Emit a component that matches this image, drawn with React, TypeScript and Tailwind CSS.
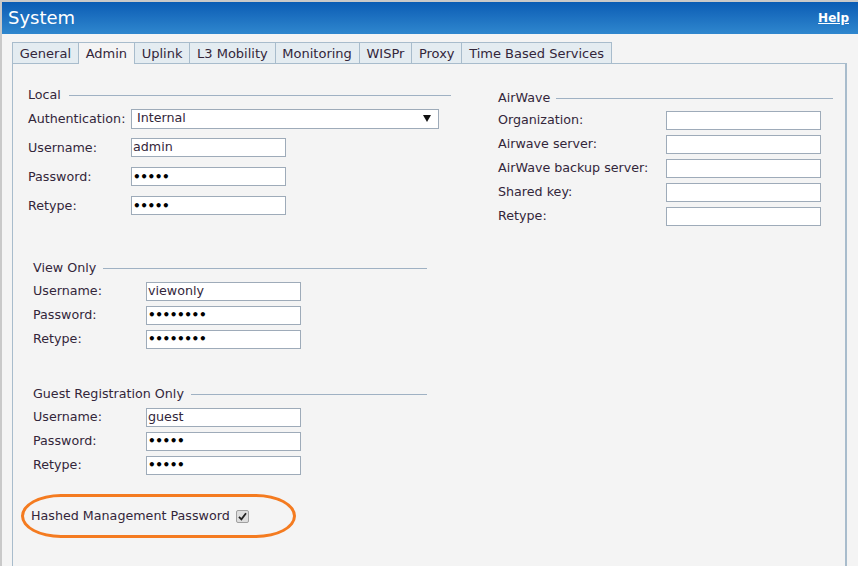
import React from "react";

const LBL = "text-[#33263a]";

function Legend({ title, lineGap = 7 }: { title: string; lineGap?: number }) {
  return (
    <div className="h-[16px] flex items-center">
      <span className={`${LBL} leading-none`}>{title}</span>
      <div className="flex-1 h-px bg-[#9fb1c3]" style={{ marginLeft: lineGap }} />
    </div>
  );
}

function Field({ value, pw, w = 155 }: { value?: string; pw?: boolean; w?: number }) {
  return (
    <div
      className="h-[19px] border border-[#9eabb9] bg-white flex items-center pl-[1px] overflow-hidden"
      style={{ width: w }}
    >
      {pw ? (
        <span className="text-[12px] font-bold text-black tracking-[-0.4px] leading-none">{value}</span>
      ) : (
        <span className="text-[#33263a] leading-none">{value}</span>
      )}
    </div>
  );
}

function Row({
  label,
  labelW,
  h,
  children,
}: {
  label: string;
  labelW: number;
  h: number;
  children: React.ReactNode;
}) {
  return (
    <div className="flex items-center" style={{ height: h }}>
      <div className={LBL} style={{ width: labelW }}>
        {label}
      </div>
      {children}
    </div>
  );
}

const tabs = ["General", "Admin", "Uplink", "L3 Mobility", "Monitoring", "WISPr", "Proxy", "Time Based Services"];

export default function App() {
  return (
    <div className="w-[858px] h-[566px] overflow-hidden bg-[#f4f4f4] border-l-2 border-t-2 border-[#c9c9c9] font-['DejaVu_Sans',sans-serif] text-[12.7px] flex flex-col">
      <div className="h-[32px] shrink-0 bg-gradient-to-b from-[#0a5cb4] to-[#2f87ce] flex items-center justify-between pl-[6px] pr-[9px]">
        <span className="text-white text-[18px] leading-none">System</span>
        <a className="text-white text-[12px] font-bold underline leading-none">Help</a>
      </div>
      <div className="flex-1 flex flex-col pl-[10px] pr-[11px] pt-[8px]">
        <div className="flex items-end h-[21px] relative z-10">
          {tabs.map((t, i) => {
            const active = t === "Admin";
            return (
              <div
                key={t}
                className={`h-[21px] px-[6.8px] flex items-center border-t border-l border-[#a8bccc] text-[13px] text-[#33263a] leading-none ${
                  i === tabs.length - 1 ? "border-r" : ""
                } ${active ? "bg-[#f4f4f4] h-[22px] mb-[-1px]" : "bg-[#e4ecf1]"}`}
              >
                {t}
              </div>
            );
          })}
        </div>
        <div className="flex-1 border-t border-l border-r-2 border-[#a8bccc] pl-[15px] pr-[12px] pt-[23px] flex">
          {/* Left column */}
          <div className="w-[423px] flex flex-col">
            <Legend title="Local" lineGap={8} />
            <div className="mt-[1px]">
              <Row label="Authentication:" labelW={103} h={29}>
                <div className="w-[308px] h-[20px] border border-[#9eabb9] bg-white flex items-center justify-between pl-[5px] pr-[7px]">
                  <span className="text-[#33263a] leading-none">Internal</span>
                  <svg width="8" height="7" viewBox="0 0 8 7">
                    <path d="M0 0 H8 L4 7 Z" fill="#111" />
                  </svg>
                </div>
              </Row>
              <Row label="Username:" labelW={103} h={29}>
                <Field value="admin" />
              </Row>
              <Row label="Password:" labelW={103} h={29}>
                <Field value="•••••" pw />
              </Row>
              <Row label="Retype:" labelW={103} h={29}>
                <Field value="•••••" pw />
              </Row>
            </div>

            <div className="mt-[40px] ml-[5px] w-[394px]">
              <Legend title="View Only" lineGap={7} />
              <div className="mt-[3px]">
                <Row label="Username:" labelW={113} h={24}>
                  <Field value="viewonly" />
                </Row>
                <Row label="Password:" labelW={113} h={24}>
                  <Field value="••••••••" pw />
                </Row>
                <Row label="Retype:" labelW={113} h={24}>
                  <Field value="••••••••" pw />
                </Row>
              </div>
            </div>

            <div className="mt-[35px] ml-[5px] w-[394px]">
              <Legend title="Guest Registration Only" lineGap={7} />
              <div className="mt-[3px]">
                <Row label="Username:" labelW={113} h={24}>
                  <Field value="guest" />
                </Row>
                <Row label="Password:" labelW={113} h={24}>
                  <Field value="•••••" pw />
                </Row>
                <Row label="Retype:" labelW={113} h={24}>
                  <Field value="•••••" pw />
                </Row>
              </div>
            </div>

            <div className="mt-[17px] ml-[-7px] w-[275px] h-[44px] border-[3px] border-[#f47b20] rounded-[40px/22px] flex items-center pl-[7px]">
              <span className={`${LBL} leading-none`}>Hashed Management Password</span>
              <div className="ml-[6px] w-[13px] h-[13px] rounded-[2px] border border-[#a0a0a0] bg-[#dedede] flex items-center justify-center">
                <svg width="9" height="9" viewBox="0 0 9 9">
                  <path d="M1 4.8 L3.4 7.3 L8 1.2" fill="none" stroke="#222" strokeWidth="1.8" />
                </svg>
              </div>
            </div>
          </div>

          {/* Right column */}
          <div className="ml-[47px] w-[335px] mt-[3px] flex flex-col">
            <Legend title="AirWave" lineGap={6} />
            <div className="mt-[2px]">
              <Row label="Organization:" labelW={168} h={24}>
                <Field />
              </Row>
              <Row label="Airwave server:" labelW={168} h={24}>
                <Field />
              </Row>
              <Row label="AirWave backup server:" labelW={168} h={24}>
                <Field />
              </Row>
              <Row label="Shared key:" labelW={168} h={24}>
                <Field />
              </Row>
              <Row label="Retype:" labelW={168} h={24}>
                <Field />
              </Row>
            </div>
          </div>
        </div>
      </div>
    </div>
  );
}
